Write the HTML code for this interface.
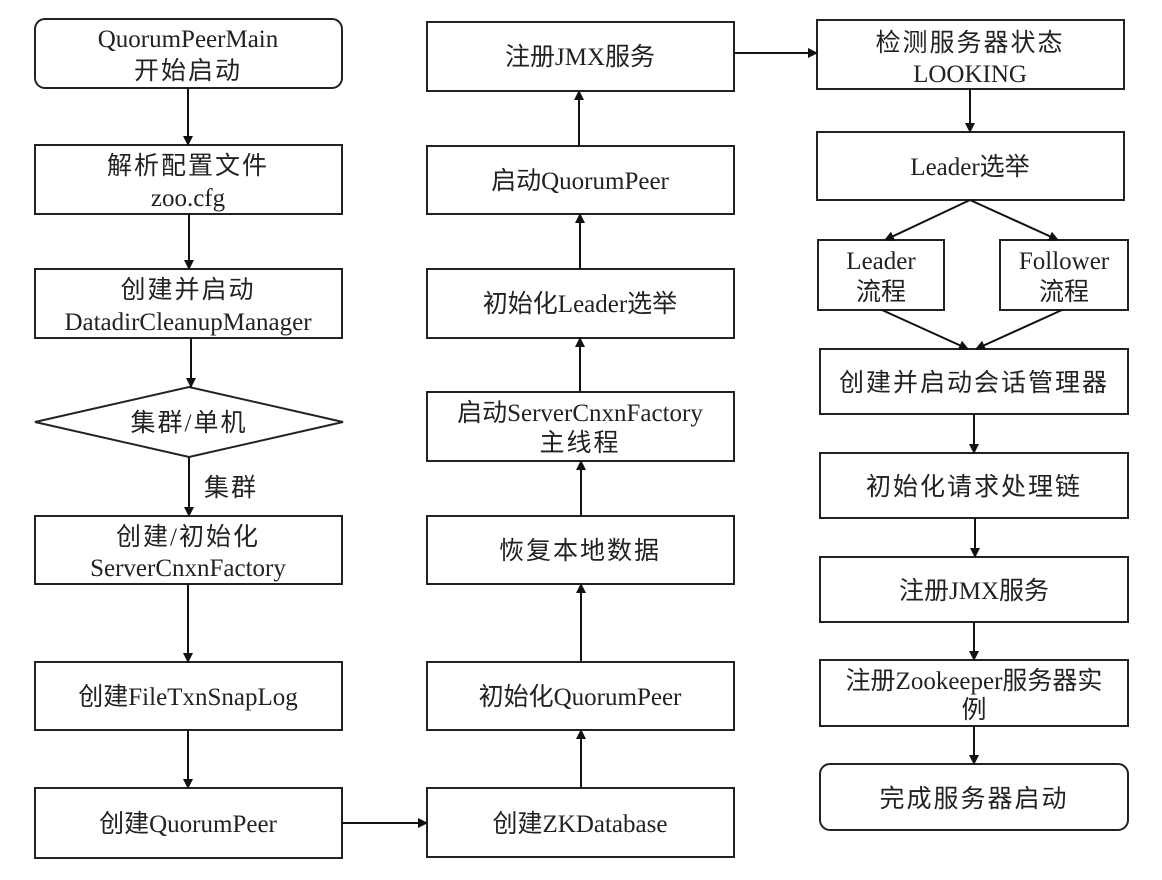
<!DOCTYPE html>
<html><head><meta charset="utf-8"><style>
html,body{margin:0;padding:0;background:#fff;}
svg{display:block;}
text{font-family:"Liberation Serif","Noto Sans CJK SC",serif;font-size:25px;fill:#222;text-anchor:middle;}
.c{letter-spacing:2px;}
</style></head><body>
<svg width="1162" height="880" viewBox="0 0 1162 880" xmlns="http://www.w3.org/2000/svg">
<defs><marker id="a" markerWidth="10" markerHeight="10" refX="9" refY="5" orient="auto" markerUnits="userSpaceOnUse"><path d="M0,0 L10,5 L0,10 z" fill="#111"/></marker></defs>
<g fill="#fff" stroke="#222" stroke-width="2">
<rect x="35" y="19" width="307" height="69" rx="10"/>
<rect x="35" y="145" width="307" height="69"/>
<rect x="35" y="269" width="307" height="69"/>
<polygon points="35,422 189,387 343,422 189,457"/>
<rect x="35" y="516" width="307" height="68"/>
<rect x="35" y="662" width="307" height="68"/>
<rect x="35" y="788" width="307" height="70"/>
<rect x="427" y="22" width="307" height="69"/>
<rect x="427" y="146" width="307" height="68"/>
<rect x="427" y="269" width="307" height="69"/>
<rect x="427" y="392" width="307" height="69"/>
<rect x="427" y="516" width="307" height="68"/>
<rect x="427" y="662" width="307" height="68"/>
<rect x="427" y="788" width="307" height="69"/>
<rect x="817" y="20" width="307" height="69"/>
<rect x="817" y="132" width="307" height="68"/>
<rect x="818" y="240" width="126" height="70"/>
<rect x="1000" y="240" width="128" height="70"/>
<rect x="820" y="349" width="308" height="65"/>
<rect x="820" y="453" width="308" height="65"/>
<rect x="820" y="557" width="308" height="65"/>
<rect x="820" y="660" width="308" height="66"/>
<rect x="820" y="764" width="308" height="66" rx="10"/>
</g>
<g stroke="#111" stroke-width="2" fill="none" marker-end="url(#a)">
<line x1="188" y1="88" x2="188" y2="145"/>
<line x1="189" y1="214" x2="189" y2="269"/>
<line x1="191" y1="338" x2="191" y2="387"/>
<line x1="189" y1="457" x2="189" y2="516"/>
<line x1="188" y1="584" x2="188" y2="662"/>
<line x1="188" y1="730" x2="188" y2="788"/>
<line x1="342" y1="823" x2="427" y2="823"/>
<line x1="581" y1="788" x2="581" y2="730"/>
<line x1="581" y1="662" x2="581" y2="584"/>
<line x1="581" y1="516" x2="581" y2="461"/>
<line x1="580" y1="392" x2="580" y2="338"/>
<line x1="580" y1="269" x2="580" y2="214"/>
<line x1="579" y1="146" x2="579" y2="91"/>
<line x1="734" y1="53" x2="817" y2="53"/>
<line x1="970" y1="89" x2="970" y2="132"/>
<line x1="970" y1="200" x2="885" y2="240"/>
<line x1="970" y1="200" x2="1058" y2="240"/>
<line x1="882" y1="310" x2="968" y2="349"/>
<line x1="1062" y1="310" x2="976" y2="349"/>
<line x1="974" y1="414" x2="974" y2="453"/>
<line x1="975" y1="518" x2="975" y2="557"/>
<line x1="974" y1="622" x2="974" y2="660"/>
<line x1="974" y1="726" x2="974" y2="764"/>
</g>
<text x="188" y="47">QuorumPeerMain</text>
<text x="188" y="79" class="c">开始启动</text>
<text x="188" y="174" class="c">解析配置文件</text>
<text x="188" y="206">zoo.cfg</text>
<text x="188" y="298" class="c">创建并启动</text>
<text x="188" y="330">DatadirCleanupManager</text>
<text x="189" y="431" class="c">集群/单机</text>
<text x="231" y="496" class="c">集群</text>
<text x="188" y="545" class="c">创建/初始化</text>
<text x="188" y="576">ServerCnxnFactory</text>
<text x="188" y="705">创建FileTxnSnapLog</text>
<text x="188" y="832">创建QuorumPeer</text>
<text x="580" y="65">注册JMX服务</text>
<text x="580" y="189">启动QuorumPeer</text>
<text x="580" y="312">初始化Leader选举</text>
<text x="580" y="421">启动ServerCnxnFactory</text>
<text x="580" y="451" class="c">主线程</text>
<text x="580" y="559" class="c">恢复本地数据</text>
<text x="580" y="705">初始化QuorumPeer</text>
<text x="580" y="832">创建ZKDatabase</text>
<text x="970" y="51" class="c">检测服务器状态</text>
<text x="970" y="82">LOOKING</text>
<text x="970" y="175">Leader选举</text>
<text x="881" y="269">Leader</text>
<text x="881" y="300">流程</text>
<text x="1064" y="269">Follower</text>
<text x="1064" y="300">流程</text>
<text x="974" y="391" class="c">创建并启动会话管理器</text>
<text x="974" y="495" class="c">初始化请求处理链</text>
<text x="974" y="599">注册JMX服务</text>
<text x="974" y="689">注册Zookeeper服务器实</text>
<text x="974" y="718">例</text>
<text x="974" y="807" class="c">完成服务器启动</text>
</svg>
</body></html>
